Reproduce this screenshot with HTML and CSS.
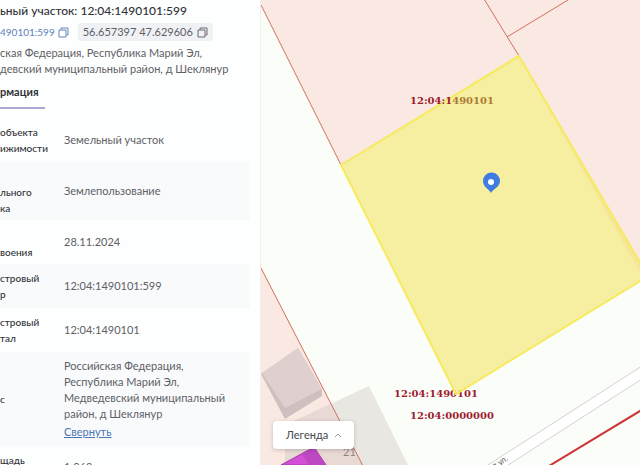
FILE: index.html
```html
<!DOCTYPE html>
<html lang="ru">
<head>
    <meta charset="UTF-8">
    <meta name="viewport" content="width=device-width, initial-scale=1.0">
    <link rel="stylesheet" href="styles.css">
    <title>Участок</title>
</head>
<body>
    <aside class="panel">
        <h1>ьный участок: 12:04:1490101:599</h1>

        <div class="codes">
            <a href="#" class="number">490101:599</a>
            <button class="copy blue" aria-label="Copy">
                <svg viewBox="0 0 11 11" width="11" height="11"><path d="M3 2.500V1h7v7H8.500M1 3h7v7H1z"/></svg>
            </button>
            <div class="coords">
                <span>56.657397 47.629606</span>
                <button class="copy" aria-label="Copy">
                    <svg viewBox="0 0 11 11" width="11" height="11"><path d="M3 2.500V1h7v7H8.500M1 3h7v7H1z"/></svg>
                </button>
            </div>
        </div>

        <p class="address">ская Федерация, Республика Марий Эл,<br>девский муниципальный район, д Шеклянур</p>

        <div class="tabs">
            <button class="tab">рмация</button>
        </div>

        <table>
            <tr><th>объекта<br>ижимости</th><td>Земельный участок</td></tr>
            <tr class="tall"><th>льного<br>ка</th><td>Землепользование</td></tr>
            <tr class="low"><th>воения</th><td>28.11.2024</td></tr>
            <tr><th>стровый<br>р</th><td>12:04:1490101:599</td></tr>
            <tr><th>стровый<br>тал</th><td>12:04:1490101</td></tr>
            <tr>
                <th>с</th>
                <td>Российская Федерация,<br>Республика Марий Эл,<br>Медведевский муниципальный<br>район, д Шеклянур<a href="#">Свернуть</a></td>
            </tr>
            <tr class="area"><th>щадь</th><td>1 068</td></tr>
        </table>
    </aside>

    <main class="map">
        <svg class="plan" viewBox="261 0 379 465" preserveAspectRatio="xMinYMin slice">
            <path class="land" d="M261 0H640V465H261z"/>
            <path class="lot" d="M261 0H640V273L519 56 341 165 261 5z"/>
            <path class="lot" d="M261 268L363 465H261z"/>

            <path class="building" d="M369 386L408 465H285V425z"/>
            <path class="wall" d="M261 374L298 348 322 390V396L285 419z"/>
            <path class="roof" d="M262 373L298 348 322 389 285 408z"/>
            <path class="shop" d="M281 465L314 447 326 465z"/>
            <path class="shop-side" d="M302 454L314 447 326 465H309z"/>

            <path class="street" d="M485 467L645 364V377L505 467z"/>
            <path class="red-line" d="M549 466L645 408"/>
            <path class="border" d="M261 5L341 165M261 268L363 466M484 -1L519 56M507 37L568 0"/>

            <g class="labels">
                <text x="394" y="397">12:04:1490101</text>
                <text x="410" y="419">12:04:0000000</text>
            </g>
            <path class="parcel" d="M519 56L645 271V278L456 394 341 165z"/>
            <text class="labels top" x="410" y="104">12:04:1<tspan class="faded">490101</tspan></text>
            <text class="house" x="343" y="456">21</text>
            <text class="road" transform="translate(494 469) rotate(-32)">я ул.</text>

            <path class="pin" d="M491 193c-2-4-8-6-8-12a8 8 0 0 1 17 0c0 6-7 8-9 12z"/>
            <circle class="hole" cx="491" cy="182" r="3"/>
        </svg>

        <button class="legend">
            Легенда
            <svg viewBox="0 0 8 5" width="8" height="5"><path d="M1 4l3-3 3 3"/></svg>
        </button>
    </main>
</body>
</html>
```
FILE: styles.css
```css
* {
    box-sizing: border-box;
}

body {
    display: flex;
    height: 100vh;
    margin: 0;
    overflow: hidden;
    font-family: Lato, "Open Sans", sans-serif;
    font-size: 11px;
    line-height: 16px;
    color: #5d6066;
    background: #fdfefe;
}

button {
    padding: 0;
    border: none;
    background: none;
    font: inherit;
    cursor: pointer;
}

.panel {
    flex: 0 0 261px;
    overflow: hidden;
    white-space: nowrap;
    border-right: 1px solid #f3eeee;
}

h1 {
    margin: 3px 0 4px;
    font-size: 12px;
    line-height: 16px;
    font-weight: 500;
    color: #303236;
}

.codes {
    display: flex;
    align-items: center;
    height: 18px;
}

.number {
    font-size: 10px;
    color: #5f80bd;
    text-decoration: none;
}

.copy {
    display: flex;
    margin-left: 3px;
    color: #66696f;
}

.copy svg {
    fill: none;
    stroke: currentColor;
}

.blue {
    color: #6684bd;
}

.coords {
    display: flex;
    align-items: center;
    height: 18px;
    margin-left: 9px;
    padding: 0 5px;
    border-radius: 3px;
    background: #f0f1f5;
}

.coords .copy {
    margin-left: 4px;
}

.address {
    margin: 4px 0 8px;
}

.tab {
    display: block;
    height: 24px;
    padding: 0 6px 8px 0;
    border-bottom: 2px solid #a9a9d2;
    font-size: 11px;
    line-height: 14px;
    font-weight: bold;
    color: #303236;
}

table {
    width: 250px;
    margin-top: 9px;
    border-collapse: collapse;
}

th,
td {
    padding: 6px 0;
    text-align: left;
    font-weight: normal;
}

th {
    width: 64px;
    font-size: 10px;
    font-weight: 500;
    color: #303236;
}

tr:nth-child(even) {
    background: #f9fafc;
}

.tall th {
    padding: 22px 0 4px;
}

.low th {
    padding: 24px 0 4px;
}

.area th {
    padding-bottom: 20px;
}

td a {
    display: block;
    margin-top: 2px;
    color: #4a76b4;
}

.map {
    position: relative;
    flex: 1;
    min-width: 0;
}

.plan {
    display: block;
    width: 100%;
    height: 100%;
}

.land {
    fill: #fbfdf8;
}

.lot {
    fill: #fae9e3;
}

.building {
    fill: #c8bcb6;
    fill-opacity: 0.35;
}

.wall {
    fill: #cfbfbf;
}

.roof {
    fill: #dfcfcf;
}

.shop {
    fill: #d24fd6;
    stroke: #a03ba5;
}

.shop-side {
    fill: #bd48c2;
}

.street {
    fill: #fff;
    stroke: #d2d2d2;
}

.red-line {
    stroke: #cb3439;
    stroke-width: 2;
}

.border {
    fill: none;
    stroke: #d1705e;
}

.parcel {
    fill: #f3e467;
    fill-opacity: 0.6;
    stroke: #f7ea5c;
    stroke-width: 2;
}

.labels {
    font: bold 10px "DejaVu Serif", serif;
    fill: #9c1c2c;
    stroke: #fff;
    stroke-width: 2;
    stroke-opacity: 0.6;
    paint-order: stroke;
}

.top {
    stroke: none;
}

.faded {
    fill: #ab7b34;
}

.house {
    font-size: 11px;
    fill: #8c8583;
}

.road {
    font: 8px "Noto Sans", sans-serif;
    fill: #555;
}

.pin {
    fill: #3d7de4;
}

.hole {
    fill: #fff;
}

.legend {
    position: absolute;
    left: 12px;
    bottom: 16px;
    display: flex;
    align-items: center;
    gap: 6px;
    height: 28px;
    padding: 0 12px 0 13px;
    border-radius: 4px;
    background: #fff;
    box-shadow: 0 1px 4px rgba(0, 0, 0, 0.2);
    color: #46484d;
}

.legend svg {
    fill: none;
    stroke: #999;
}
```
